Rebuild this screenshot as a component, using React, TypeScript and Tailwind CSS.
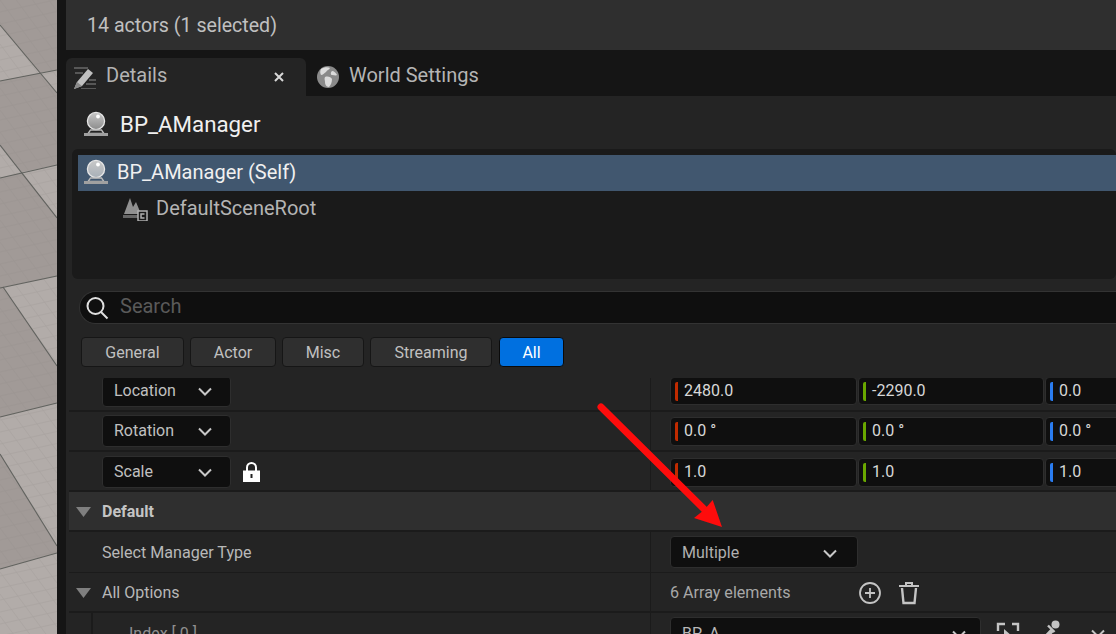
import React from "react";

const Chevron = ({ x = 14, c = "#c8c8c8" }: { x?: number; c?: string }) => (
  <svg width={x} height={9} viewBox="0 0 14 9" fill="none" className="shrink-0">
    <path d="M1 1.5 7 7.5 13 1.5" stroke={c} strokeWidth="2" />
  </svg>
);

const Tri = () => (
  <svg width={15} height={10} viewBox="0 0 15 10" className="shrink-0">
    <path d="M0 0H15L7.5 10Z" fill="#7f7f7f" />
  </svg>
);

const Webcam = ({ id, c = "#8c8c8c" }: { id: string; c?: string }) => (
  <svg width={26} height={26} viewBox="0 0 26 26" className="shrink-0">
    <defs>
      <linearGradient id={id} x1="0" y1="0" x2="0" y2="1">
        <stop offset="0" stopColor="#c8c8c8" />
        <stop offset="1" stopColor={c} />
      </linearGradient>
    </defs>
    <circle cx="13" cy="10" r="8.6" fill={`url(#${id})`} stroke="#e6e6e6" strokeWidth="1.3" />
    <circle cx="15" cy="5.5" r="1.9" fill="#fff" />
    <path d="M7.5 19h11l2.5 3.5H5Z" fill="none" stroke="#bcbcbc" strokeWidth="1.3" />
    <rect x="1" y="22" width="24" height="3" fill="#a0a0a0" />
  </svg>
);

const DARK = [
  "0,0 57,0 57,70 40,73 0,25",
  "0,81 40,73 57,93 57,165 22,172 0,145",
  "0,178 22,172 57,218 57,276 3,287 0,288",
  "0,288 3,287 57,366 57,403 0,417",
  "0,454 57,546 57,553 0,569",
];

const Viewport = () => {
  const across = Array.from({ length: 62 }, (_, i) => i * 12);
  const down = Array.from({ length: 36 }, (_, i) => i * 22 - 110);
  return (
    <svg width={57} height={634} viewBox="0 0 57 634" className="shrink-0 block">
      <rect width="57" height="634" fill="#b2aca9" />
      {DARK.map((p) => (
        <polygon key={p} points={p} fill="#a19a97" />
      ))}
      <g stroke="#8f8986" strokeWidth="0.6" opacity="0.28" fill="none">
        {across.map((y) => (
          <path key={y} d={`M0 ${y} L57 ${y - 12.5}`} />
        ))}
        {down.map((y) => (
          <path key={`d${y}`} d={`M0 ${y} L57 ${y + 77}`} />
        ))}
      </g>
      <g stroke="#5d5f5b" strokeWidth="1.1" fill="none" opacity="0.95">
        <path d="M0 25 57 93" />
        <path d="M0 145 57 218" />
        <path d="M3 287 57 366" />
        <path d="M0 454 57 546" />
        <path d="M0 81 57 70" />
        <path d="M0 178 57 165" />
        <path d="M0 288 57 276" />
        <path d="M0 417 57 403" />
        <path d="M0 569 57 553" />
      </g>
    </svg>
  );
};

const Filter = ({ label, w, active }: { label: string; w: string; active?: boolean }) => (
  <div
    className={`${w} h-[30px] pt-[1px] flex items-center justify-center rounded-[4px] border text-[16px] ${
      active ? "bg-[#0070e0] border-[#0a0a0a] text-white" : "bg-[#2f2f2f] border-[#161616] text-[#c0c0c0]"
    }`}
  >
    {label}
  </div>
);

const Dropdown = ({ label, h }: { label: string; h: string }) => (
  <div className={`w-[129px] ${h} shrink-0 flex items-center justify-between pl-[11px] pr-[18px] bg-[#0f0f0f] border border-[#2e2e2e] rounded-[4px] text-[16px] text-[#c0c0c0]`}>
    <span>{label}</span>
    <Chevron />
  </div>
);

const Field = ({ color, value, w, h }: { color: string; value: string; w: string; h: string }) => (
  <div className={`${w} ${h} shrink-0 flex items-center bg-[#0f0f0f] border border-[#2e2e2e] rounded-[4px] pl-[4px] text-[16px] text-[#d8d8d8]`}>
    <span className={`w-[3px] h-[19px] rounded-l-[2px] mr-[6px] ${color}`} />
    <span>{value}</span>
  </div>
);

const VectorRow = ({
  label,
  values,
  rowH,
  dd,
  fh,
  lock,
}: {
  label: string;
  values: string[];
  rowH: string;
  dd: string;
  fh: string;
  lock?: boolean;
}) => (
  <div className={`${rowH} flex border-b-2 border-[#1b1b1b]`}>
    <div className="w-[582px] shrink-0 flex items-center pl-[33px] gap-[10px] border-r border-[#1b1b1b]">
      <Dropdown label={label} h={dd} />
      {lock && (
        <svg width={17} height={20} viewBox="0 0 17 20" className="ml-[2px] shrink-0">
          <path d="M4 9V5.5a4.5 4.5 0 0 1 9 0V9" fill="none" stroke="#fff" strokeWidth="2" />
          <path d="M0 8.5h17V20H0Z" fill="#fff" />
          <rect x="7.5" y="12" width="2" height="4" fill="#222" />
        </svg>
      )}
    </div>
    <div className="flex items-center pl-[19px] gap-[1px]">
      <Field color="bg-[#c12b00]" value={values[0]} w="w-[187px]" h={fh} />
      <Field color="bg-[#6aa800]" value={values[1]} w="w-[186px]" h={fh} />
      <Field color="bg-[#2a7cf0]" value={values[2]} w="w-[120px]" h={fh} />
    </div>
  </div>
);

export default function App() {
  return (
    <div className="w-[1116px] h-[634px] overflow-hidden relative flex bg-[#151515] font-['Roboto',sans-serif]">
      <Viewport />
      <div className="w-[9px] shrink-0 bg-[#151515]" />
      <div className="flex-1 min-w-0 flex flex-col">
        <div className="h-[50px] shrink-0 bg-[#2f2f2f] pl-[21px] pt-[2px] flex items-center text-[19.6px] text-[#c0c0c0]">
          14 actors (1 selected)
        </div>
        <div className="h-[8px] shrink-0 bg-[#151515]" />
        <div className="h-[38px] shrink-0 flex bg-[#151515]">
          <div className="w-[240px] shrink-0 bg-[#242424] rounded-t-[6px] flex items-center pl-[7px] pr-[22px] text-[20px] text-[#b4b4b4]">
            <svg width={24} height={24} viewBox="0 0 24 24" className="shrink-0 mr-[9px]">
              <path d="M1 24 4 17 15 4l5 4L9 21Z" fill="#c0c0c0" />
              <path d="M1 24l3-7 5 4Z" fill="#8a8a8a" />
              <path d="M1 3h14M2 8h8M16 15h7M13 19h10M8 24h15" stroke="#8a8a8a" strokeWidth="1.2" fill="none" />
            </svg>
            <span className="flex-1 pb-[4px]">Details</span>
            <svg width={10} height={10} viewBox="0 0 10 10">
              <path d="M1 1 9 9M9 1 1 9" stroke="#d8d8d8" strokeWidth="2" />
            </svg>
          </div>
          <div className="flex items-center pl-[11px] gap-[10px] text-[20px] text-[#b4b4b4]">
            <svg width={22} height={22} viewBox="0 0 22 22" className="shrink-0">
              <circle cx="11" cy="11" r="11" fill="#8a8a8a" />
              <path d="M4 3c3-2 7-2 9-1-1 2-3 2-4 4-2 1-3 3-5 3-1-2-1-4 0-6ZM15 5c2 0 4 2 5 4-1 1-3 0-5 0-1 0-2-2 0-4ZM8 11c3-1 6 0 7 2 0 3-1 6-3 8-3 0-4-3-4-5 0-2-1-3 0-5Z" fill="#dcdcdc" />
            </svg>
            <span className="pb-[4px]">World Settings</span>
          </div>
        </div>
        <div className="h-[53px] shrink-0 bg-[#242424] flex items-center pl-[17px] pt-[3px] gap-[11px] text-[22.3px] text-[#f0f0f0]">
          <Webcam id="wa" />
          <span className="pt-[2px]">BP_AManager</span>
        </div>
        <div className="h-[130px] shrink-0 bg-[#242424] pl-[6px]">
          <div className="h-full bg-[#1a1a1a] rounded-[6px] pl-[6px] pt-[6px]">
            <div className="h-[36px] bg-[#41576f] flex items-center pl-[5px] pb-[2px] gap-[8px] text-[20px] text-[#f0f0f0]">
              <Webcam id="wb" c="#a8b0b8" />
              <span>BP_AManager (Self)</span>
            </div>
            <div className="h-[36px] flex items-center pl-[44px] pb-[2px] gap-[8px] text-[20px] text-[#b4b4b4]">
              <svg width={26} height={26} viewBox="0 0 26 26" className="shrink-0">
                <path d="M2 19 8 3l3 9 3-5 5 12H2Z" fill="#909090" />
                <rect x="1" y="20" width="18" height="3" fill="#666" />
                <rect x="16" y="16" width="9" height="10" fill="#1a1a1a" stroke="#b0b0b0" strokeWidth="1.5" />
                <path d="M22.5 19h-3.5v4h3.5" stroke="#b0b0b0" strokeWidth="1.5" fill="none" />
              </svg>
              <span>DefaultSceneRoot</span>
            </div>
          </div>
        </div>
        <div className="h-[99px] shrink-0 bg-[#242424] pl-[13px] pt-[12px] flex flex-col">
          <div className="h-[33px] shrink-0 rounded-l-full bg-[#0f0f0f] border border-r-0 border-[#333] flex items-center pl-[5px] gap-[11px] text-[20px] text-[#5a5a5a]">
            <svg width={24} height={24} viewBox="0 0 24 24" className="shrink-0">
              <circle cx="10.5" cy="10" r="8" fill="none" stroke="#e0e0e0" strokeWidth="2" />
              <path d="M16 16l6.5 6.5" stroke="#e0e0e0" strokeWidth="2" />
            </svg>
            <span className="pb-[4px]">Search</span>
          </div>
          <div className="flex pl-[2px] mt-[13px] gap-[6px]">
            <Filter label="General" w="w-[103px]" />
            <Filter label="Actor" w="w-[86px]" />
            <Filter label="Misc" w="w-[82px]" />
            <Filter label="Streaming" w="w-[122px]" />
            <div className="ml-[1px]">
              <Filter label="All" w="w-[65px]" active />
            </div>
          </div>
        </div>
        <div className="flex-1 min-h-0 overflow-hidden bg-[#242424] pl-[3px]">
          <div className="-mt-[8px]">
            <VectorRow label="Location" values={["2480.0", "-2290.0", "0.0"]} rowH="h-[42px] pt-[2px]" dd="h-[31px]" fh="h-[28px]" />
            <VectorRow label="Rotation" values={["0.0 °", "0.0 °", "0.0 °"]} rowH="h-[40px]" dd="h-[32px]" fh="h-[29px]" />
            <VectorRow label="Scale" values={["1.0", "1.0", "1.0"]} rowH="h-[40px] pt-[2px]" dd="h-[32px]" fh="h-[29px]" lock />
            <div className="h-[40px] bg-[#2f2f2f] border-b-2 border-[#1b1b1b] flex items-center pl-[7px] pt-[2px] gap-[11px] text-[16px] font-bold text-[#c4c4c4]">
              <Tri />
              <span>Default</span>
            </div>
            <div className="h-[41px] flex border-b border-[#1b1b1b]">
              <div className="w-[582px] shrink-0 flex items-center pl-[33px] pt-[2px] text-[16.1px] text-[#b8b8b8] border-r border-[#1b1b1b]">
                Select Manager Type
              </div>
              <div className="flex items-center pl-[19px]">
                <div className="w-[188px] h-[32px] flex items-center justify-between pl-[11px] pr-[20px] pt-[2px] bg-[#0f0f0f] border border-[#2e2e2e] rounded-[4px] text-[16px] text-[#b0b0b0]">
                  <span>Multiple</span>
                  <Chevron />
                </div>
              </div>
            </div>
            <div className="h-[40px] flex border-b-2 border-[#1b1b1b]">
              <div className="w-[582px] shrink-0 flex items-center pl-[7px] pt-[2px] gap-[11px] text-[16px] text-[#b8b8b8] border-r border-[#1b1b1b]">
                <Tri />
                <span>All Options</span>
              </div>
              <div className="flex items-center pl-[19px] pt-[2px] text-[16.1px] text-[#a8a8a8]">
                <span className="w-[189px] shrink-0">6 Array elements</span>
                <svg width={22} height={22} viewBox="0 0 22 22" className="shrink-0">
                  <circle cx="11" cy="11" r="10" fill="none" stroke="#c4c4c4" strokeWidth="1.8" />
                  <path d="M11 6v10M6 11h10" stroke="#c4c4c4" strokeWidth="1.8" />
                </svg>
                <svg width={22} height={24} viewBox="0 0 22 24" className="shrink-0 ml-[17px]">
                  <path d="M1 5h20M8 5V2h6v3" stroke="#c4c4c4" strokeWidth="2" fill="none" />
                  <path d="M4 7l1.5 15h11L18 7" stroke="#c4c4c4" strokeWidth="2.4" fill="none" />
                </svg>
              </div>
            </div>
            <div className="h-[40px] flex">
              <div className="w-[24px] shrink-0 border-r-2 border-[#1b1b1b]" />
              <div className="w-[558px] shrink-0 pl-[36px] pt-[9px] text-[16px] text-[#8f8f8f] border-r border-[#1b1b1b]">Index [ 0 ]</div>
              <div className="flex items-start pl-[19px] pt-[4px] text-[16px] text-[#b8b8b8]">
                <div className="w-[311px] h-[34px] shrink-0 flex items-center justify-between pl-[11px] pr-[14px] bg-[#0f0f0f] border border-[#2e2e2e] rounded-[4px]">
                  <span>BP_A</span>
                  <Chevron />
                </div>
                <svg width={24} height={24} viewBox="0 0 24 24" className="shrink-0 ml-[15px] mt-[5px]">
                  <path d="M2 9V2h7M16 2h6v7M2 16v6h7M22 16v6h-7" stroke="#c4c4c4" strokeWidth="2.4" fill="none" />
                  <path d="M8 7l9 8-9 4Z" fill="#c4c4c4" />
                </svg>
                <svg width={24} height={24} viewBox="0 0 24 24" className="shrink-0 ml-[17px] mt-[2px]">
                  <circle cx="18.5" cy="5.5" r="4" fill="#c4c4c4" />
                  <path d="M11 6.5l6.5 6.5" stroke="#c4c4c4" strokeWidth="2.4" />
                  <path d="M14 9.5 5 19v3h3l9-9.5Z" fill="#c4c4c4" />
                </svg>
                <svg width={14} height={9} viewBox="0 0 14 9" className="shrink-0 ml-[30px] mt-[12px]">
                  <path d="M1 1.5 7 7.5 13 1.5" stroke="#c4c4c4" strokeWidth="2" fill="none" />
                </svg>
              </div>
            </div>
          </div>
        </div>
      </div>
      <svg width={1116} height={634} viewBox="0 0 1116 634" className="absolute inset-0 pointer-events-none">
        <path d="M601 407 708 513" stroke="#fe0c0c" strokeWidth="7" strokeLinecap="round" fill="none" />
        <path d="M712.7 500 722 527 694 518 704 510Z" fill="#fe0c0c" />
      </svg>
    </div>
  );
}
